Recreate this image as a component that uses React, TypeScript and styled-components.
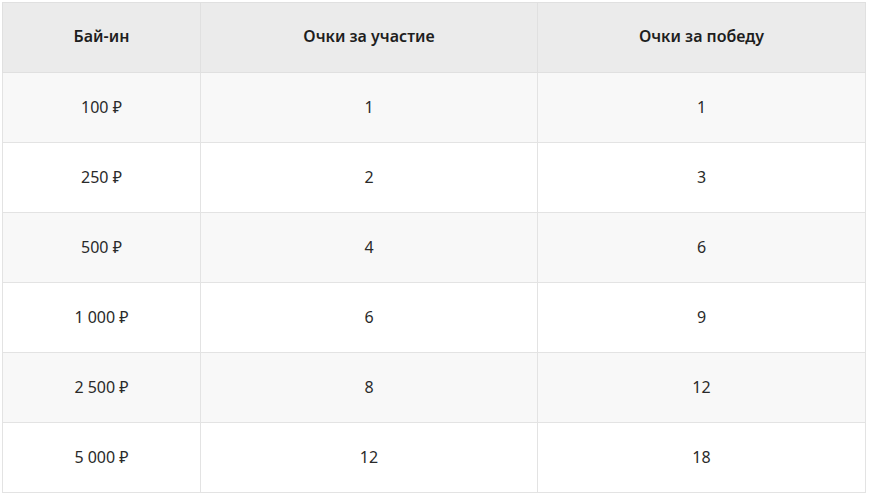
import React from 'react'
import styled, { createGlobalStyle } from 'styled-components'

const GlobalStyle = createGlobalStyle`
  html, body {
    margin: 0;
    padding: 0;
    background: #ffffff;
  }
  body {
    padding: 2px 4px 0 2px;
    font-family: 'Noto Sans', 'DejaVu Sans', sans-serif;
    color: #222222;
  }
`

const Table = styled.table`
  width: 863px;
  border-collapse: collapse;
  table-layout: fixed;
  font-size: 16px;
  line-height: 20px;
`

const HeadCell = styled.th<{ $width: number }>`
  width: ${({ $width }) => $width}px;
  height: 70px;
  padding: 0 10px 4px;
  box-sizing: border-box;
  background: #ebebeb;
  border: 1px solid #e0e0e0;
  font-weight: 600;
  text-align: center;
  vertical-align: middle;
  color: #1e1e1e;
`

const Row = styled.tr<{ $striped: boolean }>`
  background: ${({ $striped }) => ($striped ? '#f8f8f8' : '#ffffff')};
`

const Cell = styled.td`
  height: 70px;
  padding: 0 10px 2px;
  box-sizing: border-box;
  border: 1px solid #e3e3e3;
  text-align: center;
  vertical-align: middle;
  font-weight: 400;
  color: #2a2a2a;
`

const rows = [
  { buyIn: '100 ₽', part: 1, win: 1 },
  { buyIn: '250 ₽', part: 2, win: 3 },
  { buyIn: '500 ₽', part: 4, win: 6 },
  { buyIn: '1 000 ₽', part: 6, win: 9 },
  { buyIn: '2 500 ₽', part: 8, win: 12 },
  { buyIn: '5 000 ₽', part: 12, win: 18 }
]

const App = () => {
  return (
    <>
      <GlobalStyle />
      <Table>
        <thead>
          <tr>
            <HeadCell $width={198}>Бай-ин</HeadCell>
            <HeadCell $width={337}>Очки за участие</HeadCell>
            <HeadCell $width={328}>Очки за победу</HeadCell>
          </tr>
        </thead>
        <tbody>
          {rows.map((row, i) => (
            <Row key={row.buyIn} $striped={i % 2 === 0}>
              <Cell>{row.buyIn}</Cell>
              <Cell>{row.part}</Cell>
              <Cell>{row.win}</Cell>
            </Row>
          ))}
        </tbody>
      </Table>
    </>
  )
}

export default App
